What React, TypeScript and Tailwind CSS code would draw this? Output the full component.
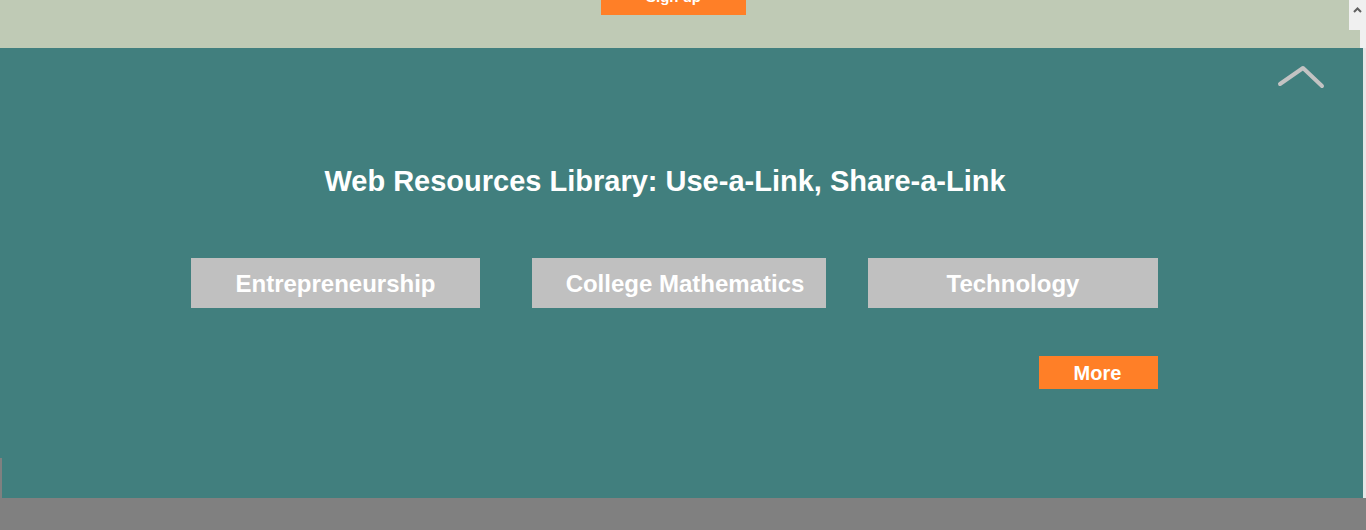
const topics = [
  { label: "Entrepreneurship", width: "w-[289px]", pad: "" },
  { label: "College Mathematics", width: "w-[294px] ml-[52px]", pad: "pl-[12px]" },
  { label: "Technology", width: "w-[290px] ml-[42px]", pad: "" },
];

function ChevronUp() {
  return (
    <svg width="50" height="28" viewBox="0 0 50 28" fill="none">
      <polyline
        points="4,22 27,6 46,24"
        stroke="#c3c3c3"
        strokeWidth="4"
        strokeLinecap="round"
        strokeLinejoin="round"
      />
    </svg>
  );
}

export default function App() {
  return (
    <div className="relative h-[530px] w-[1366px] overflow-hidden bg-[#808080] font-['Liberation_Sans',Arial,sans-serif]">
      <header className="flex h-[48px]">
        <div className="h-full w-[1360px] bg-[#bfcab5]">
          <div className="ml-[601px] -mt-[21px] flex h-[36px] w-[145px] items-center justify-center bg-[#ff7f27] text-[15px] font-bold text-white">
            Sign up
          </div>
        </div>
        <div className="h-full w-[6px] bg-[#f0f0f0]" />
      </header>

      <div className="flex h-[450px]">
        <section className="relative h-full w-[1363px] bg-[#417f7e]">
          <div className="absolute left-[1276px] top-[14px]">
            <ChevronUp />
          </div>

          <h1 className="w-[1330px] pt-[117px] text-center text-[29px] font-bold leading-[32px] text-white">
            Web Resources Library: Use-a-Link, Share-a-Link
          </h1>

          <div className="ml-[191px] mt-[61px] flex">
            {topics.map((t) => (
              <a
                key={t.label}
                href="#"
                className={`${t.width} ${t.pad} flex h-[50px] items-center justify-center bg-[#c0c0c0] pt-[2px] text-[24px] font-bold text-white`}
              >
                {t.label}
              </a>
            ))}
          </div>

          <div className="mt-[48px] flex">
            <a
              href="#"
              className="ml-[1039px] flex h-[33px] w-[119px] items-center justify-center bg-[#ff7f27] pr-[2px] pt-[1px] text-[20px] font-bold text-white"
            >
              More
            </a>
          </div>

          <div className="absolute bottom-0 left-0 h-[40px] w-[2px] bg-[#808080]" />
        </section>
        <div className="h-full w-[3px] bg-[#e6e6e6]" />
      </div>

      <div className="absolute right-0 top-0 flex h-[30px] w-[17px] items-start justify-center bg-[#f0f0f0] pt-[7px]">
        <svg width="9" height="6" viewBox="0 0 9 6" fill="none">
          <polyline points="1,5 4.5,1.5 8,5" stroke="#606060" strokeWidth="2" />
        </svg>
      </div>
    </div>
  );
}
